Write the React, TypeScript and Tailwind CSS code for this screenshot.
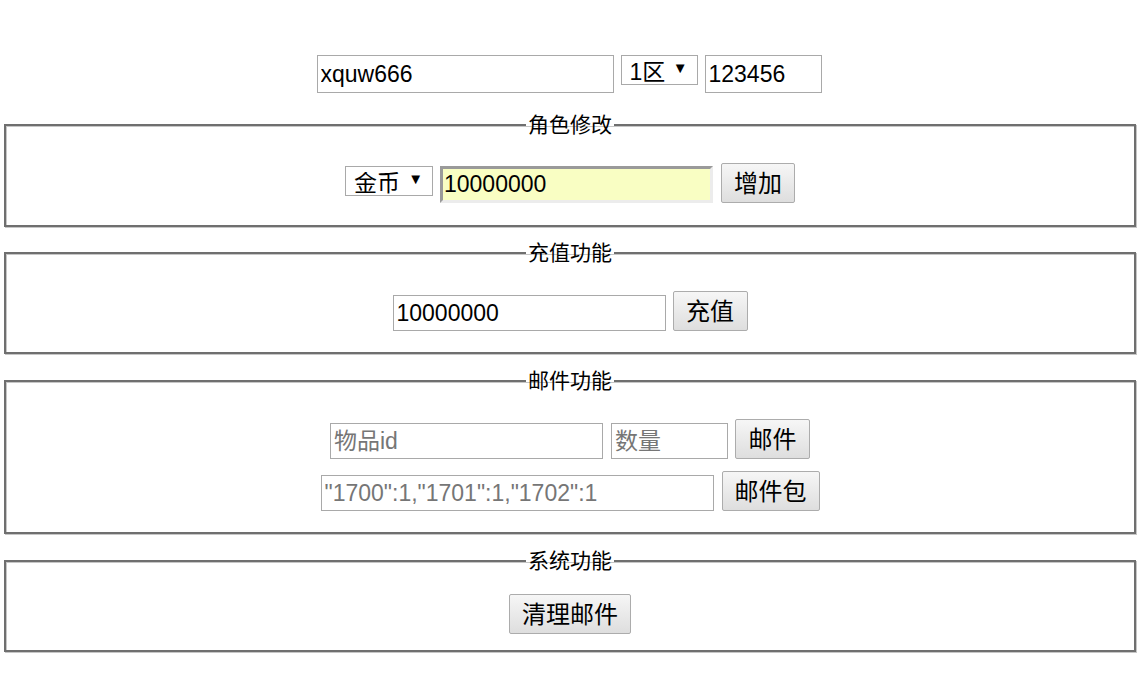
import React from 'react';

const font = 'font-["Liberation_Sans","Noto_Sans_CJK_SC",sans-serif]';

function Legend({ children }: { children: React.ReactNode }) {
  return (
    <legend className="mx-auto px-[2px] text-[21px] leading-[24px] text-black">{children}</legend>
  );
}

function Btn({ label, width }: { label: string; width: string }) {
  return (
    <button
      type="button"
      className={`${width} h-[40px] rounded-[2px] border border-[#acacac] bg-gradient-to-b from-[#f6f6f6] to-[#dedede] pt-[2px] text-[24px] leading-none text-black`}
    >
      {label}
    </button>
  );
}

function Select({ value, width, className = '' }: { value: string; width: string; className?: string }) {
  return (
    <div className={`relative ${width} h-[30px] ${className}`}>
      <select
        defaultValue={value}
        className="h-full w-full appearance-none border border-[#a9a9a9] bg-white pl-[8px] pt-[4px] text-[23px] leading-none text-black outline-none"
      >
        <option>{value}</option>
      </select>
      <span className="pointer-events-none absolute right-[10px] top-[5px] text-[15px] leading-none text-black">▼</span>
    </div>
  );
}

export default function App() {
  const input = 'h-[36px] border border-[#a9a9a9] bg-white px-[3px] text-[23px] text-black outline-none placeholder:text-[#767676]';
  const box = 'ml-[4px] mr-[2px] border-2 border-[#6f6f6f] px-0 shadow-[1px_1px_0_#c6c6c6,inset_1px_1px_0_#c6c6c6]';

  return (
    <div className={`min-h-screen bg-white pt-[55px] ${font}`}>
      {/* account row */}
      <div className="flex items-start justify-center gap-[7px]">
        <input className={`${input} h-[38px] w-[297px]`} defaultValue="xquw666" />
        <Select value="1区" width="w-[77px]" />
        <input className={`${input} h-[38px] w-[117px]`} defaultValue="123456" />
      </div>

      <fieldset className={`${box} mt-[20px] pb-[22px] pt-[26px]`}>
        <Legend>角色修改</Legend>
        <div className="flex items-end justify-center">
          <Select value="金币" width="w-[88px]" className="mb-[7px]" />
          <input
            className="ml-[7px] h-[37px] w-[273px] border-[3px] border-b-[#ececec] border-l-[#9a9a9a] border-r-[#ececec] border-t-[#9a9a9a] bg-[#f9fec3] px-[1px] text-[23px] text-black outline-none"
            defaultValue="10000000"
          />
          <div className="ml-[8px]">
            <Btn label="增加" width="w-[74px]" />
          </div>
        </div>
      </fieldset>

      <fieldset className={`${box} mt-[14px] pb-[21px] pt-[26px]`}>
        <Legend>充值功能</Legend>
        <div className="flex items-end justify-center gap-[7px]">
          <input className={`${input} w-[273px]`} defaultValue="10000000" />
          <Btn label="充值" width="w-[75px]" />
        </div>
      </fieldset>

      <fieldset className={`${box} mt-[15px] pb-[21px] pt-[26px]`}>
        <Legend>邮件功能</Legend>
        <div className="flex flex-col items-center gap-[12px]">
          <div className="flex items-end gap-[7px]">
            <input className={`${input} w-[273px]`} placeholder="物品id" />
            <input className={`${input} ml-[1px] w-[117px]`} placeholder="数量" />
            <Btn label="邮件" width="w-[75px]" />
          </div>
          <div className="flex items-end gap-[8px]">
            <input className={`${input} w-[393px]`} placeholder={'"1700":1,"1701":1,"1702":1'} />
            <Btn label="邮件包" width="w-[98px]" />
          </div>
        </div>
      </fieldset>

      <fieldset className={`${box} mt-[15px] pb-[16px] pt-[21px]`}>
        <Legend>系统功能</Legend>
        <div className="flex justify-center">
          <Btn label="清理邮件" width="w-[122px]" />
        </div>
      </fieldset>
    </div>
  );
}
